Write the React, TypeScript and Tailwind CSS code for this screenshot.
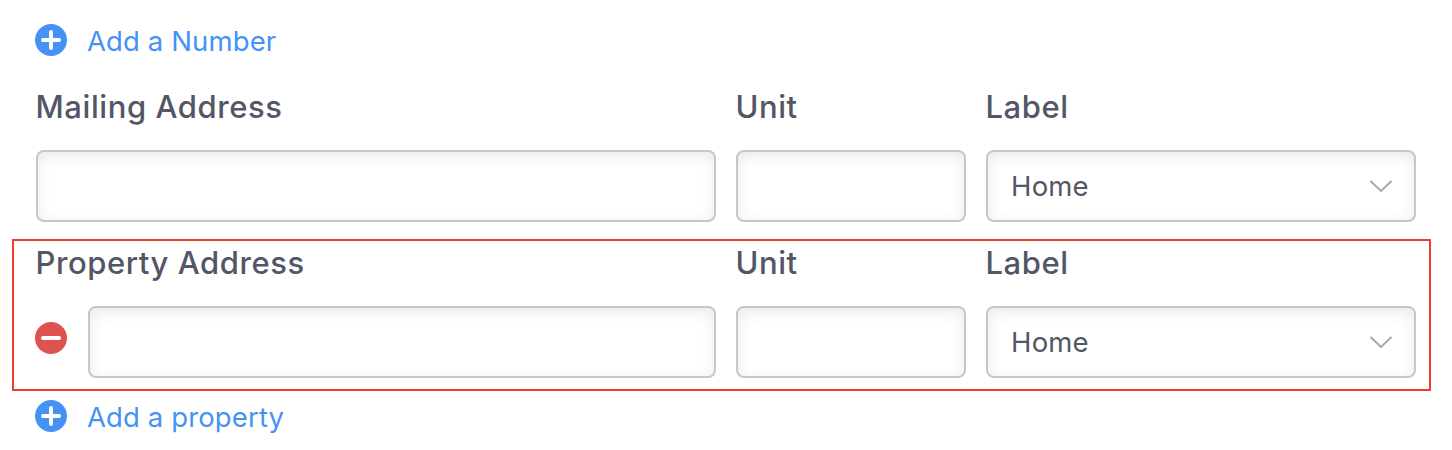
import React, { useState } from 'react'

type AddLinkProps = {
  text: string;
}

type AddressRowProps = {
  title: string;
  removable?: boolean;
}

const fieldStyle = "h-[72px] rounded-lg border-2 border-[#c5c6cf] bg-white shadow-[inset_0_4px_14px_rgba(60,65,75,0.11)] outline-none"
const labelStyle = "-ml-[0.5px] block h-10 text-[31px] leading-10 font-medium tracking-[0.57px] whitespace-nowrap text-[#525666]"

function PlusIcon() {
  return (
    <svg className="size-8 shrink-0" viewBox="0 0 32 32" fill="none">
      <circle cx="16" cy="16" r="16" fill="#4592f5" />
      <path d="M8 16H24M16 8V24" stroke="white" strokeWidth="4" strokeLinecap="round" />
    </svg>
  )
}

function MinusIcon() {
  return (
    <svg className="size-8 shrink-0" viewBox="0 0 32 32" fill="none">
      <circle cx="16" cy="16" r="16" fill="#de5351" />
      <path d="M8 16H24" stroke="white" strokeWidth="4" strokeLinecap="round" />
    </svg>
  )
}

function AddLink({ text }: AddLinkProps) {
  return (
    <button className="flex h-8 items-start gap-5 pl-[35px]">
      <PlusIcon />
      <span className="text-[27.5px] leading-[34px] tracking-[0.12px] whitespace-nowrap text-[#4592f5]">{text}</span>
    </button>
  )
}

function AddressRow({ title, removable }: AddressRowProps) {
  const [address, setAddress] = useState("")
  const [unit, setUnit] = useState("")

  return (
    <div className="flex gap-5">
      <div className="w-[680px]">
        <label className={labelStyle}>{title}</label>
        <div className="-ml-px mt-[23px] flex items-center gap-[21px]">
          {removable && <button className="flex pb-2"><MinusIcon /></button>}
          <input
            className={fieldStyle + (removable ? " min-w-0 flex-1" : " ml-px min-w-0 flex-1")}
            type="text"
            value={address}
            onChange={(e) => setAddress(e.target.value)}
          />
        </div>
      </div>
      <div className="w-[230px]">
        <label className={labelStyle}>Unit</label>
        <input
          className={fieldStyle + " mt-[23px] block w-full"}
          type="text"
          value={unit}
          onChange={(e) => setUnit(e.target.value)}
        />
      </div>
      <div className="w-[430px]">
        <label className={labelStyle}>Label</label>
        <button className={fieldStyle + " mt-[23px] flex w-full items-center justify-between pr-[21px] pl-[23px]"}>
          <span className="text-[27.5px] leading-[34px] tracking-[0.2px] text-[#525666]">Home</span>
          <svg className="h-3 w-6" viewBox="0 0 24 12" fill="none">
            <path d="M1.5 1L12 11L22.5 1" stroke="#a3a5b1" strokeWidth="1.8" />
          </svg>
        </button>
      </div>
    </div>
  )
}

export default function App() {
  return (
    <div className="h-[450px] w-[1452px] overflow-hidden bg-white pt-6 font-[Inter,sans-serif]">
      <AddLink text="Add a Number" />
      <div className="mt-[31px] pl-9">
        <AddressRow title="Mailing Address" />
      </div>
      {/* outlined property block */}
      <div className="mt-[17px] ml-3 h-[152px] w-[1419px] border-2 border-[#eb4027] pt-[2px] pl-[22px]">
        <AddressRow title="Property Address" removable />
      </div>
      <div className="mt-[9px]">
        <AddLink text="Add a property" />
      </div>
    </div>
  )
}
